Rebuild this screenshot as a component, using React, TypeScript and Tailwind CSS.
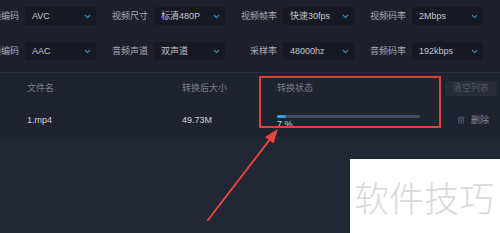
import { ChevronDown, Trash2 } from 'lucide-react';

const rows = [
  [
    ['视频编码', 'AVC'],
    ['视频尺寸', '标清480P'],
    ['视频帧率', '快速30fps'],
    ['视频码率', '2Mbps'],
  ],
  [
    ['音频编码', 'AAC'],
    ['音频声道', '双声道'],
    ['采样率', '48000hz'],
    ['音频码率', '192kbps'],
  ],
];

function Select({ label, value }: { label: string; value: string }) {
  return (
    <div className="flex items-center">
      <div className="w-[58px] pr-[6px] text-right text-[9px] leading-none text-[#a7abb6] whitespace-nowrap">{label}</div>
      <div className="w-[71px] h-[18px] rounded-[2px] bg-[#161922] flex items-center justify-between pl-[7px] pr-[4px]">
        <span className="text-[9px] leading-none text-[#c3c6ce]">{value}</span>
        <ChevronDown className="w-[9px] h-[9px] text-[#3c93cc]" strokeWidth={3} />
      </div>
    </div>
  );
}

export default function App() {
  return (
    <div
      className="relative w-[500px] h-[233px] overflow-hidden bg-[#222735]"
      style={{ fontFamily: '"Liberation Sans", "Noto Sans CJK SC", sans-serif' }}
    >
      <div className="h-[73px] bg-[#1d202b] border-b border-[#2b2f3b] pt-[7px]">
        <div className="ml-[-33px] flex flex-col gap-[17px]">
          {rows.map((row, i) => (
            <div key={i} className="flex">
              {row.map(([l, v]) => (
                <Select key={l} label={l} value={v} />
              ))}
            </div>
          ))}
        </div>
      </div>

      <div className="h-[64px] bg-[#1f2330]">
        <div className="flex h-[30px] items-center pl-[27px] text-[9px] leading-none text-[#7a7f8b]">
          <div className="w-[155px]">文件名</div>
          <div className="w-[95px]">转换后大小</div>
          <div className="w-[168px]">转换状态</div>
          <div className="w-[52px] h-[15px] rounded-[2px] bg-[#282c39] text-[#4f5667] flex items-center justify-center">
            清空列表
          </div>
        </div>
        <div className="flex h-[34px] items-center pl-[27px] text-[9px] leading-none text-[#cfd2d9]">
          <div className="w-[155px]">1.mp4</div>
          <div className="w-[95px]">49.73M</div>
          <div className="w-[168px] self-start pt-[12px]">
            <div className="w-[143px] h-[3px] rounded-full bg-[#444c5f]">
              <div className="w-[9px] h-[3px] rounded-full bg-[#3a9ee0]" />
            </div>
            <div className="mt-[2px] text-[9px] leading-none text-[#d5d8de]">7 %</div>
          </div>
          <div className="flex items-center pl-[12px] gap-[6px] text-[#858b9a]">
            <Trash2 className="w-[8px] h-[8px] text-[#3e5873]" strokeWidth={3} />
            <span>删除</span>
          </div>
        </div>
      </div>

      <div className="absolute left-[259px] top-[76px] w-[182px] h-[52px] border-2 border-[#e2403e]" />

      <svg className="absolute left-0 top-0" width="500" height="233" viewBox="0 0 500 233">
        <line x1="208" y1="220" x2="271" y2="138" stroke="#e8453f" strokeWidth="2" strokeLinecap="round" />
        <polygon points="278,129 273.5,143.5 265,137" fill="#e8453f" />
      </svg>

      <div className="absolute left-[350px] top-[159px] w-[150px] h-[74px] bg-white flex items-center pl-[4px]">
        <span
          className="text-[35px] leading-none text-[#d9d9d9] whitespace-nowrap"
          style={{ fontFamily: '"Noto Sans CJK SC", sans-serif', fontWeight: 300 }}
        >
          软件技巧
        </span>
      </div>
    </div>
  );
}
